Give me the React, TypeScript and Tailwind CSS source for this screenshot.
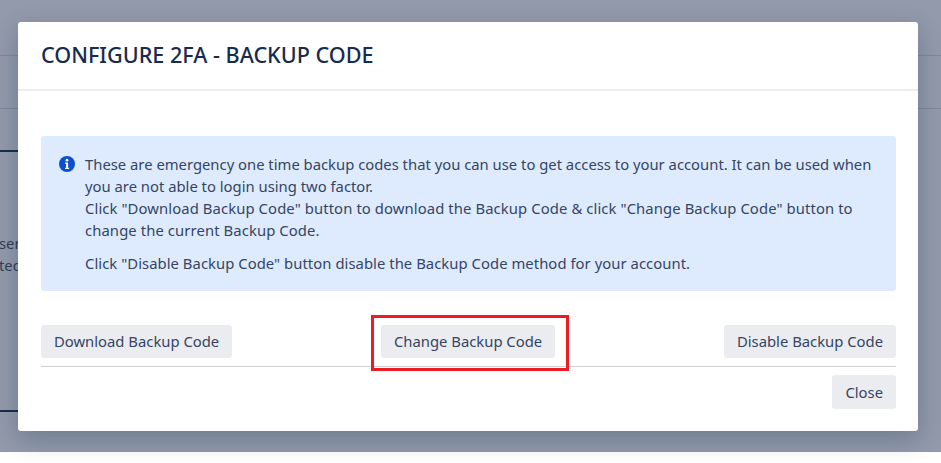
const BackupButton = ({ label }: { label: string }) => (
  <button className="h-[33px] px-[13px] rounded-[3px] bg-[#ebecf0] text-[14.82px] leading-[33px] text-[#344563]">
    {label}
  </button>
);

const InfoIcon = () => (
  <svg className="w-4 h-4 mt-[3px] shrink-0" viewBox="0 0 16 16">
    <circle cx="8" cy="8" r="8" fill="#0b4fd1" />
    <circle cx="8" cy="4.2" r="1.4" fill="#fff" />
    <path d="M6.2 6.6h2.9v5.2h1v1.3H6.1v-1.3h1V7.9h-.9z" fill="#fff" />
  </svg>
);

const App = () => {
  return (
    <div className="relative h-[463px] bg-white font-['Noto_Sans',sans-serif] overflow-hidden">
      {/* page behind the backdrop */}
      <div className="h-[452px] bg-[#929aab]">
        <div className="h-[56px] border-b border-[#7f8798]" />
        <div className="h-[53px] border-b border-[#7f8798]" />
        <div className="h-[43px] border-b-2 border-[#1c2c4c] w-[18px]" />
        <div className="h-[260px] border-b-2 border-[#1c2c4c] w-[18px] pt-[80px] text-[14.82px] leading-[22px] text-[#343f56] overflow-hidden">
          <div className="-ml-[1px]">ser</div>
          <div className="-ml-[1px]">ted</div>
        </div>
      </div>

      {/* modal */}
      <div className="absolute left-[18px] top-[22px] w-[900px] h-[409px] bg-white rounded-[3px] shadow-[0_8px_24px_rgba(9,30,66,0.25)] flex flex-col">
        <div className="h-[69px] shrink-0 border-b-2 border-[#ebecf0] pl-[23px] pr-[22px] flex items-center">
          <h1 className="text-[21.6px] font-medium text-[#172b4d]">CONFIGURE 2FA - BACKUP CODE</h1>
        </div>
        <div className="pl-[23px] pr-[22px] pt-[45px]">
          <div className="h-[155px] bg-[#deebff] rounded-[3px] px-[18px] pt-[17px] flex gap-[10px] text-[14.82px] leading-[22px] text-[#344563]">
            <InfoIcon />
            <div>
              <p>These are emergency one time backup codes that you can use to get access to your account. It can be used when you are not able to login using two factor.</p>
              <p className="tracking-[0.1px]">Click "Download Backup Code" button to download the Backup Code &amp; click "Change Backup Code" button to change the current Backup Code.</p>
              <p className="mt-[11px] tracking-[0.05px]">Click "Disable Backup Code" button disable the Backup Code method for your account.</p>
            </div>
          </div>
          <div className="mt-[34px] flex justify-between h-[33px]">
            <BackupButton label="Download Backup Code" />
            <div className="-mt-[10px] -ml-[16px] border-[3px] border-[#ed1c24] h-[56px] pl-[7px] pr-[11px] pt-[7px] relative z-10">
              <BackupButton label="Change Backup Code" />
            </div>
            <BackupButton label="Disable Backup Code" />
          </div>
          <div className="mt-[8px] border-t border-[#d0d0d0] pt-[8px] flex justify-end">
            <button className="h-[34px] px-[13px] rounded-[3px] bg-[#ebecf0] text-[14.82px] text-[#344563]">Close</button>
          </div>
        </div>
      </div>
    </div>
  );
};

export default App;
